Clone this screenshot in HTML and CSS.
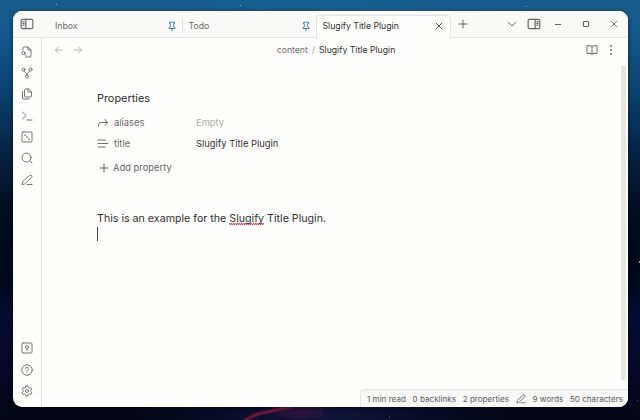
FILE: index.html
```html
<!DOCTYPE html>
<html lang="en">
<head>
<meta charset="utf-8">
<title>Slugify Title Plugin</title>
<link rel="stylesheet" href="styles.css">
</head>
<body>
<svg class="wallpaper" viewBox="0 0 640 420">
  <defs><filter id="soft" x="-20%" y="-100%" width="140%" height="300%"><feGaussianBlur stdDeviation=".8"/></filter><filter id="glow" x="-50%" y="-100%" width="200%" height="300%"><feGaussianBlur stdDeviation="4"/></filter></defs>
  <ellipse cx="300" cy="412" rx="26" ry="4" fill="#3a1540" filter="url(#glow)"/>
  <path d="M244 421Q256 413 272 411Q280 408 293 407" fill="none" stroke="#b4203f" stroke-width="2" filter="url(#soft)"/>
  <g fill="#8babc4"><rect x="56" y="4" width="1" height="1"/><rect x="240" y="5" width="1" height="1"/><rect x="526" y="6" width="1" height="1"/><rect x="639" y="261" width="1" height="2"/><rect x="637" y="400" width="1" height="1" fill="#503f70"/><rect x="357" y="414" width="1" height="1" fill="#702050"/><rect x="389" y="417" width="1" height="1" fill="#286080"/></g>
</svg>
<main class="window">
  <header class="titlebar">
    <div class="toggle"><svg class="i14" viewBox="0 0 24 24"><rect x="2" y="4" width="20" height="16" rx="2"/><path d="M10 4v16M5 8h2M5 11h2M5 14h2"/></svg></div>
    <div class="tab inbox"><span>Inbox</span><svg class="pin" viewBox="0 0 24 24"><path d="M12 17v5M5 17h14v-2l-3-3V6l2-1V2H6v3l2 1v6l-3 3z"/></svg></div>
    <div class="tab todo"><span>Todo</span><svg class="pin" viewBox="0 0 24 24"><path d="M12 17v5M5 17h14v-2l-3-3V6l2-1V2H6v3l2 1v6l-3 3z"/></svg></div>
    <div class="tab active"><span>Slugify Title Plugin</span><svg class="close" viewBox="0 0 24 24"><path d="M5 5l14 14M19 5L5 19"/></svg></div>
    <div class="controls">
      <svg class="i12" viewBox="0 0 24 24"><path d="M12 4v16M4 12h16"/></svg>
      <svg class="i12 chevron" viewBox="0 0 24 24"><path d="M5 9l7 7 7-7"/></svg>
      <svg class="i14" viewBox="0 0 24 24"><rect x="2" y="4" width="20" height="16" rx="2"/><path d="M14 4v16M17 8h2M17 11h2M17 14h2"/></svg>
      <svg class="i12 win" viewBox="0 0 12 12"><path d="M3 6.5h6"/></svg>
      <svg class="i12 win" viewBox="0 0 12 12"><path d="M3.5 3.5h5v5h-5z"/></svg>
      <svg class="i12 win thin" viewBox="0 0 12 12"><path d="M3.2 3.2l5.6 5.6M8.8 3.2L3.2 8.8"/></svg>
    </div>
  </header>
  <div class="body">
    <nav class="ribbon">
      <svg viewBox="0 0 24 24"><path d="M4 8V4a2 2 0 0 1 2-2h8l6 6v12a2 2 0 0 1-2 2H9M14 2v6h6"/><circle cx="5" cy="14" r="3"/><path d="M7 16l3 3"/></svg>
      <svg viewBox="0 0 24 24"><circle cx="5" cy="5" r="3"/><circle cx="19" cy="5" r="3"/><circle cx="12" cy="19" r="3"/><path d="M6 8c0 4 6 2 6 8M18 8c0 4-6 2-6 8"/></svg>
      <svg viewBox="0 0 24 24"><path d="M15 2H9a2 2 0 0 0-2 2v12a2 2 0 0 0 2 2h10a2 2 0 0 0 2-2V8zM14 2v6h7M3 7v13a2 2 0 0 0 2 2h11"/></svg>
      <svg viewBox="0 0 24 24"><path d="M3 18l7-7-7-7M12 20h10"/></svg>
      <svg viewBox="0 0 24 24"><rect x="2" y="2" width="20" height="20" rx="2"/><path class="dots" d="M8 8h.01M12 12h.01M16 16h.01"/></svg>
      <svg viewBox="0 0 24 24"><circle cx="11" cy="11" r="9"/><path d="M18 18l4 4"/></svg>
      <svg viewBox="0 0 24 24"><path d="M12 21h10M17 3a2.8 2.8 0 0 1 4 4L7 20l-5 1 1-5z"/></svg>
      <svg class="push" viewBox="0 0 24 24"><rect x="2" y="2" width="20" height="20" rx="2"/><circle cx="12" cy="10.500" r="3"/><path d="M12 13.500V17"/></svg>
      <svg viewBox="0 0 24 24"><circle cx="12" cy="12" r="10.500"/><path d="M9 9a3 3 0 0 1 6 .5c0 2-3 2.500-3 4.500M12 17.500h.01"/></svg>
      <svg viewBox="0 0 24 24"><path d="M10 2h4l.7 3 2 1.200 3-1 2 3.600-2.300 2.100v2.200l2.300 2.100-2 3.600-3-1-2 1.200-.7 3h-4l-.7-3-2-1.200-3 1-2-3.600 2.300-2.100v-2.200L2.300 8.800l2-3.600 3 1 2-1.200z"/><circle cx="12" cy="12" r="3"/></svg>
    </nav>
    <section class="pane">
      <div class="viewhead">
        <div class="nav"><svg class="i12" viewBox="0 0 24 24"><path d="M11 6l-6 6 6 6M5 12h14"/></svg><svg class="i12" viewBox="0 0 24 24"><path d="M13 6l6 6-6 6M19 12H5"/></svg></div>
        <div class="crumbs"><span>content</span><span class="slash">/</span><b>Slugify Title Plugin</b></div>
        <div class="actions"><svg class="i12" viewBox="0 0 24 24"><path d="M12 5v16M12 5c-1-1-2-1.500-4-1.500H2V19h6c2 0 3 .5 4 2 1-1.500 2-2 4-2h6V3.500h-6c-2 0-3 .5-4 1.500"/></svg><svg class="i12 more" viewBox="0 0 24 24"><circle cx="12" cy="4" r="2"/><circle cx="12" cy="12" r="2"/><circle cx="12" cy="20" r="2"/></svg></div>
      </div>
      <div class="note">
        <div class="content">
          <h2>Properties</h2>
          <div class="prop"><svg class="i12" viewBox="0 0 24 24"><path d="M16 5l5 6-5 6M3 18v-2a5 5 0 0 1 5-5h13"/></svg><span class="key">aliases</span><span class="empty">Empty</span></div>
          <div class="prop"><svg class="i12" viewBox="0 0 24 24"><path d="M2 4h15M2 11h20M2 18h14"/></svg><span class="key">title</span><span class="value">Slugify Title Plugin</span></div>
          <div class="add"><svg class="i12" viewBox="0 0 24 24"><path d="M12 4v16M4 12h16"/></svg><span>Add property</span></div>
          <p>This is an example for the <span class="misspelled">Slugify</span> Title Plugin.</p>
          <div class="caret"></div>
        </div>
        <div class="scrollbar"></div>
      </div>
    </section>
  </div>
  <footer class="status"><span>1 min read</span><span>0 backlinks</span><span>2 properties</span><svg class="i12" viewBox="0 0 24 24"><path d="M12 21h10M17 3a2.800 2.800 0 0 1 4 4L7 20l-5 1 1-5z"/></svg><span>9 words</span><span>50 characters</span></footer>
</main>
</body>
</html>
```
FILE: styles.css
```css
* { box-sizing: border-box; }
body {
  margin: 0; width: 640px; height: 420px; overflow: hidden; padding: 11px 12px 13px 13px;
  font: 9px/12px Inter, "Liberation Sans", sans-serif; color: #303030;
  background:
    linear-gradient(90deg, transparent 25%, #17639766 40%, transparent 85%) 0 0 / 100% 12px no-repeat,
    linear-gradient(90deg, transparent 20%, #10143a 50%, transparent 80%) 0 100% / 100% 14px no-repeat,
    linear-gradient(#185c8c 0, #14578a 8%, #0d4573 20%, #07294d 33%, #030f24 48%, #01071a 65%, #080b32 75%, #07092b 87%, #030515 100%);
}
svg { display: block; flex: none; overflow: visible; fill: none; stroke: currentColor; stroke-width: 2; stroke-linecap: round; stroke-linejoin: round; }
.wallpaper { position: absolute; left: 0; top: 0; width: 640px; height: 420px; stroke: none; z-index: -1; overflow: hidden; }
.window { position: relative; height: 396px; width: 615px; border-radius: 9px; overflow: hidden; background: #fefefc; display: flex; flex-direction: column; box-shadow: 0 1px 4px #0008; }
.i12 { width: 12px; height: 12px; }
.i14 { width: 14px; height: 14px; }
.titlebar { height: 27px; flex: none; display: flex; background: #fafaf8; color: #6a6a6a; border-bottom: 1px solid #e6e6e4; border-top: 1px solid #fff; }
.toggle { width: 34px; padding: 5px 0 0 7px; }
.tab { display: flex; flex: none; align-items: center; justify-content: space-between; font-size: 8.7px; }
.inbox { width: 136px; padding: 0 5px 0 8px; border-right: 1px solid #dededc; height: 14px; margin-top: 7px; }
.todo { width: 133px; padding: 0 5px 0 5.5px; height: 14px; margin-top: 7px; }
.pin { width: 10px; height: 11px; color: #5585b8; stroke-width: 2.5; }
.active { width: 135px; height: 23px; margin-top: 3px; padding: 0 6px 2px 5.500px; background: #fefefc; border: 1px solid #e3e3e1; border-bottom: 0; border-radius: 4px 4px 0 0; color: #303030; }
.active { margin-bottom: -1px; height: 24px; padding-bottom: 3px; }
.close { width: 10px; height: 10px; color: #505050; stroke-width: 2.400; }
.controls { flex: 1; min-width: 0; display: flex; align-items: center; height: 24px; padding-left: 6px; color: #666; }
.chevron { margin: 0 9px 0 37px; }
.win { stroke-width: 1; margin-left: 11px; stroke-linecap: butt; }
.win + .win { margin-left: 16px; }
.thin { stroke-width: .9; }
.body { flex: 1; min-height: 0; display: flex; }
.ribbon { width: 29px; flex: none; border-right: 1px solid #e2e2e0; display: flex; flex-direction: column; align-items: center; gap: 9.4px; padding: 7.500px 0 10px; color: #747474; }
.ribbon svg { width: 12px; height: 12px; }
.ribbon .push { margin-top: auto; }
.ribbon .dots { stroke-width: 3.500; }
.pane { flex: 1; display: flex; flex-direction: column; min-width: 0; }
.viewhead { height: 26px; flex: none; display: grid; grid-template-columns: 60px 1fr 60px; align-items: center; padding: 0 11px 3px 11px; }
.nav { display: flex; gap: 7px; color: #b2b2b2; }
.crumbs { display: flex; justify-content: center; gap: 4px; color: #707070; font-size: 8.7px; padding: 1px 0 0 2px; }
.crumbs b { font-weight: 400; color: #303030; }
.slash { color: #aaa; }
.actions { display: flex; justify-content: flex-end; gap: 7px; color: #686868; }
.more { fill: currentColor; stroke: none; }
.note { flex: 1; display: flex; justify-content: space-between; }
.content { padding: 26px 0 0 55px; }
h2 { margin: 0; font-size: 10.9px; line-height: 16px; font-weight: 400; }
.prop { height: 21.500px; display: flex; align-items: center; font-size: 9.4px; }
h2 + .prop { margin-top: 6px; }
.prop .key { width: 82px; margin-left: 5px; color: #686868; }
.prop svg { color: #707070; }
.empty { color: #ababab; }
.add { height: 18px; margin-top: 4px; padding-left: 1px; display: flex; align-items: center; gap: 3px; font-size: 9.4px; color: #666; }
.content p { margin: 34px 0 0; font-size: 10.67px; line-height: 16px; white-space: nowrap; }
.misspelled {
  background:
    linear-gradient(90deg, #d94a5d 50%, #f0b5ba 50%) 0 calc(100% - 1px) / 2px 1px repeat-x,
    linear-gradient(90deg, #f0b5ba 50%, #d94a5d 50%) 0 100% / 2px 1px repeat-x;
}
.caret { width: 1px; height: 14px; background: #404040; }
.scrollbar { width: 5px; height: 315px; margin: 1px 2px 0 0; border-radius: 3px; background: #e4e4e2; }
.status { position: absolute; right: 0; bottom: 0; width: 268px; height: 18px; padding: 0 5px 0 6px; display: flex; align-items: center; justify-content: space-between; background: #f7f7f5; border: 1px solid #e5e5e3; border-width: 1px 0 0 1px; border-radius: 5px 0 0; color: #606060; font-size: 8.1px; }
.status svg { width: 10px; height: 10px; }
```
